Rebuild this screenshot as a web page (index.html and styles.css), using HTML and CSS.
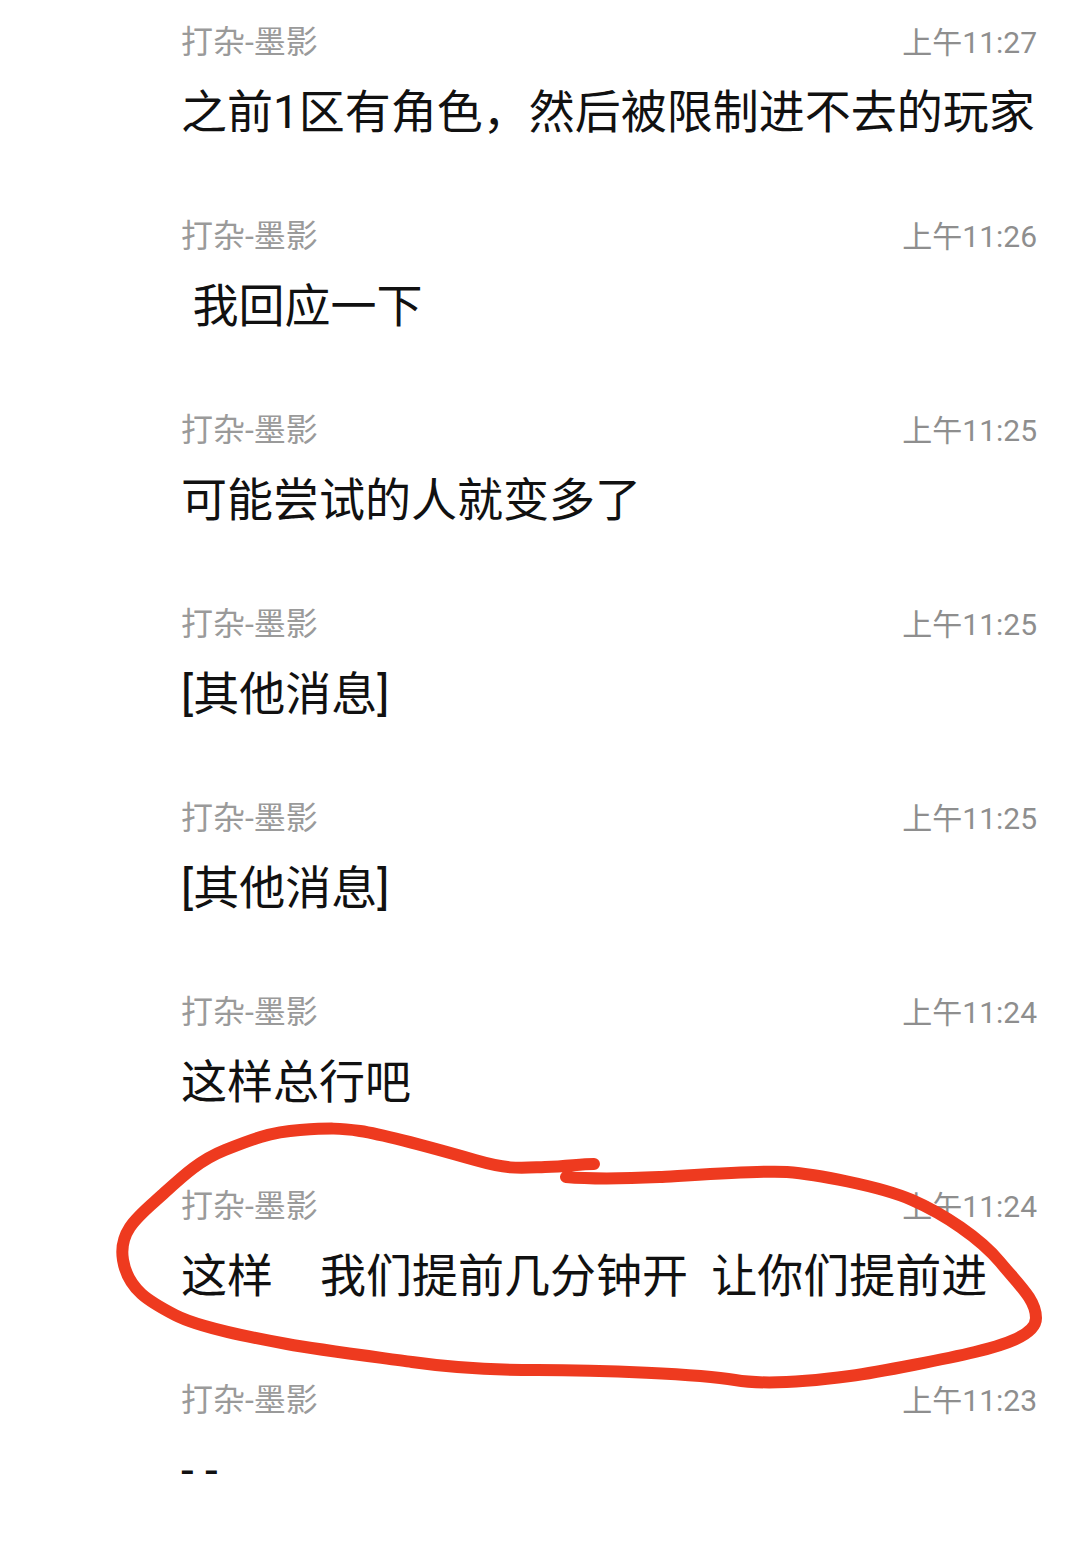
FILE: index.html
```html
<!DOCTYPE html>
<html lang="zh">
<head>
  <meta charset="UTF-8">
  <title>聊天记录</title>
  <link rel="stylesheet" href="styles.css">
</head>
<body>

  <div class="list">
    <div class="msg">
      <div class="head"><span class="name">打杂-墨影</span><span class="time">上午11:27</span></div>
      <div class="text">之前1区有角色，然后被限制进不去的玩家</div>
    </div>
    <div class="msg">
      <div class="head"><span class="name">打杂-墨影</span><span class="time">上午11:26</span></div>
      <div class="text"> 我回应一下</div>
    </div>
    <div class="msg">
      <div class="head"><span class="name">打杂-墨影</span><span class="time">上午11:25</span></div>
      <div class="text">可能尝试的人就变多了</div>
    </div>
    <div class="msg">
      <div class="head"><span class="name">打杂-墨影</span><span class="time">上午11:25</span></div>
      <div class="text">[其他消息]</div>
    </div>
    <div class="msg">
      <div class="head"><span class="name">打杂-墨影</span><span class="time">上午11:25</span></div>
      <div class="text">[其他消息]</div>
    </div>
    <div class="msg">
      <div class="head"><span class="name">打杂-墨影</span><span class="time">上午11:24</span></div>
      <div class="text">这样总行吧</div>
    </div>
    <div class="msg">
      <div class="head"><span class="name">打杂-墨影</span><span class="time">上午11:24</span></div>
      <div class="text">这样&emsp;我们提前几分钟开&ensp;让你们提前进</div>
    </div>
    <div class="msg">
      <div class="head"><span class="name">打杂-墨影</span><span class="time">上午11:23</span></div>
      <div class="text">- -</div>
    </div>
  </div>

  <!-- hand-drawn red circle over the 11:24 message -->
  <svg class="mark" width="1080" height="1567" viewBox="0 0 1080 1567">
    <path d="M566 1177 C 600 1180, 640 1178, 662 1177 S 760 1170, 787 1172 S 880 1186, 912 1200 S 980 1238, 1000 1262 S 1036 1300, 1036 1318 S 1000 1346, 975 1352 S 880 1372, 850 1376 S 770 1386, 735 1380 S 600 1370, 537 1370 S 440 1366, 412 1362 S 320 1350, 287 1344 S 200 1328, 175 1315 S 128 1290, 123 1260 S 140 1215, 162 1195 S 200 1160, 225 1150 S 270 1132, 300 1130 S 340 1128, 360 1131 S 440 1150, 475 1160 S 520 1168, 545 1167 S 580 1164, 594 1164"
          fill="none" stroke="#ee3a1f" stroke-width="12" stroke-linecap="round" stroke-linejoin="round"/>
  </svg>

</body>
</html>
```

FILE: styles.css
```css
body {
  margin: 0;
  background: #ffffff;
  font-family: Roboto, "Noto Sans CJK SC", sans-serif;
}

.list {
  padding: 0 43px 0 181px;
}

.msg {
  height: 194px;
  padding-top: 22px;
  box-sizing: border-box;
}

.head {
  display: flex;
  justify-content: space-between;
  align-items: baseline;
  line-height: 40px;
}

.name {
  font-size: 32px;
  color: #9a9a9a;
}

.time {
  font-size: 30px;
  color: #8e8e8e;
}

.text {
  margin-top: 19px;
  line-height: 60px;
  font-size: 46px;
  color: #111111;
  white-space: pre;
}

.mark {
  position: absolute;
  top: 0;
  left: 0;
  pointer-events: none;
}
```
